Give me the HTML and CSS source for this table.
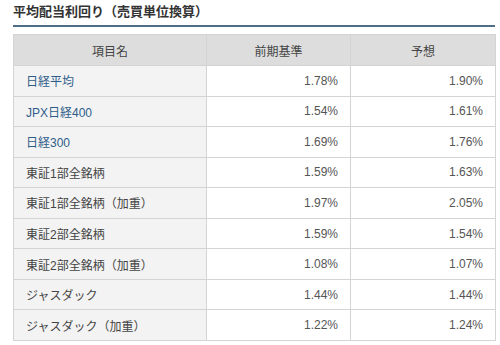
FILE: index.html
```html
<!DOCTYPE html>
<html lang="ja">
<head>
<meta charset="utf-8">
<link rel="stylesheet" href="styles.css">
</head>
<body>
<div class="wrap">
  <h2 class="title">平均配当利回り（売買単位換算）</h2>
  <table class="yield">
    <colgroup>
      <col class="c1"><col class="c2"><col class="c3">
    </colgroup>
    <thead>
      <tr><th>項目名</th><th>前期基準</th><th>予想</th></tr>
    </thead>
    <tbody>
      <tr><td class="name link">日経平均</td><td class="num">1.78%</td><td class="num">1.90%</td></tr>
      <tr><td class="name link">JPX日経400</td><td class="num">1.54%</td><td class="num">1.61%</td></tr>
      <tr><td class="name link">日経300</td><td class="num">1.69%</td><td class="num">1.76%</td></tr>
      <tr><td class="name">東証1部全銘柄</td><td class="num">1.59%</td><td class="num">1.63%</td></tr>
      <tr><td class="name">東証1部全銘柄（加重）</td><td class="num">1.97%</td><td class="num">2.05%</td></tr>
      <tr><td class="name">東証2部全銘柄</td><td class="num">1.59%</td><td class="num">1.54%</td></tr>
      <tr><td class="name">東証2部全銘柄（加重）</td><td class="num">1.08%</td><td class="num">1.07%</td></tr>
      <tr><td class="name">ジャスダック</td><td class="num">1.44%</td><td class="num">1.44%</td></tr>
      <tr><td class="name">ジャスダック（加重）</td><td class="num">1.22%</td><td class="num">1.24%</td></tr>
    </tbody>
  </table>
</div>
</body>
</html>
```
FILE: styles.css
```css
html, body {
  margin: 0;
  padding: 0;
  background: #ffffff;
}
body {
  font-family: "Liberation Sans", Arial, "Noto Sans CJK JP", sans-serif;
  font-size: 12px;
  color: #555555;
}
.wrap {
  padding: 0 5px 0 13px;
}
.title {
  margin: 0;
  width: 482px;
  padding: 3px 0 5px 0;
  font-size: 13px;
  line-height: 17px;
  font-weight: bold;
  color: #333333;
  border-bottom: 2px solid #4f6d84;
}
.yield {
  margin-top: 7px;
  width: 482px;
  border-collapse: collapse;
  table-layout: fixed;
}
.c1 { width: 193px; }
.c2 { width: 144px; }
.c3 { width: 145px; }
.yield th, .yield td {
  border: 1px solid #d4d4d4;
  padding: 0 12px;
}
.yield th {
  height: 30px;
  background: #dddddd;
  font-weight: normal;
  color: #444444;
  text-align: center;
}
.yield td {
  height: 29.56px;
}
.name {
  background: #f3f3f3;
  color: #444444;
}
.name.link {
  color: #2f5d8a;
}
.num {
  text-align: right;
  color: #555555;
}
```
